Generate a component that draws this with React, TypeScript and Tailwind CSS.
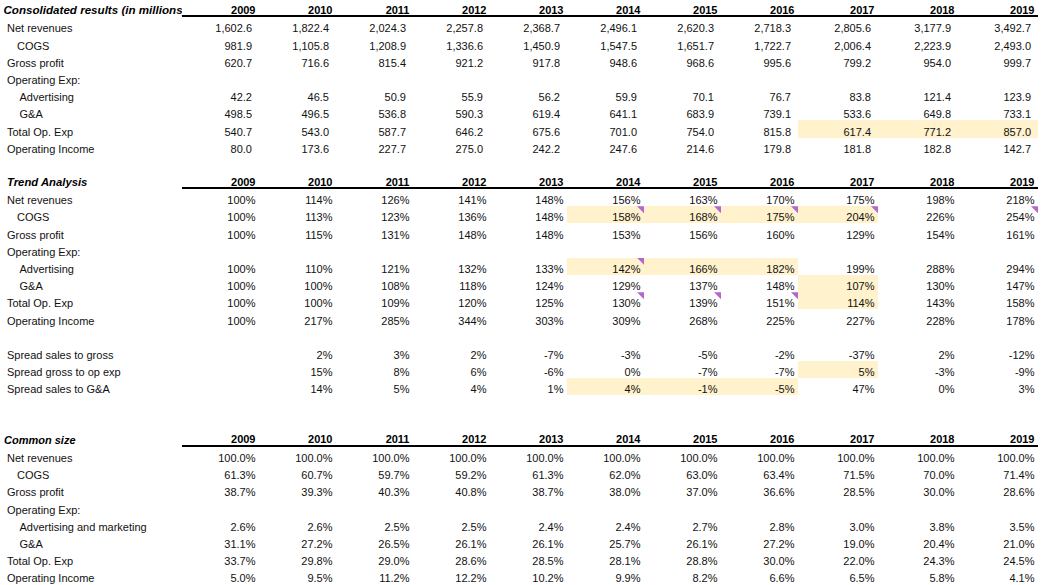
import React from "react";

const YEARS = ["2009", "2010", "2011", "2012", "2013", "2014", "2015", "2016", "2017", "2018", "2019"];

type RowDef = {
  label: string;
  indent?: 0 | 1 | 2;
  values?: string[];
  hl?: number[];
  mk?: number[];
};

type Section = {
  title: string;
  titleCls: string;
  kind: "num" | "pct";
  rows: RowDef[];
  extra?: RowDef[];
};

const Y = (...ys: number[]) => ys.map((y) => y - 2009);

const sections: Section[] = [
  {
    title: "Consolidated results (in millions)",
    titleCls: "pl-[3.5px] text-[11.6px]",
    kind: "num",
    rows: [
      { label: "Net revenues", values: ["1,602.6", "1,822.4", "2,024.3", "2,257.8", "2,368.7", "2,496.1", "2,620.3", "2,718.3", "2,805.6", "3,177.9", "3,492.7"] },
      { label: "COGS", indent: 1, values: ["981.9", "1,105.8", "1,208.9", "1,336.6", "1,450.9", "1,547.5", "1,651.7", "1,722.7", "2,006.4", "2,223.9", "2,493.0"] },
      { label: "Gross profit", values: ["620.7", "716.6", "815.4", "921.2", "917.8", "948.6", "968.6", "995.6", "799.2", "954.0", "999.7"] },
      { label: "Operating Exp:" },
      { label: "Advertising", indent: 2, values: ["42.2", "46.5", "50.9", "55.9", "56.2", "59.9", "70.1", "76.7", "83.8", "121.4", "123.9"] },
      { label: "G&A", indent: 2, values: ["498.5", "496.5", "536.8", "590.3", "619.4", "641.1", "683.9", "739.1", "533.6", "649.8", "733.1"] },
      { label: "Total Op. Exp", values: ["540.7", "543.0", "587.7", "646.2", "675.6", "701.0", "754.0", "815.8", "617.4", "771.2", "857.0"], hl: Y(2017, 2018, 2019) },
      { label: "Operating Income", values: ["80.0", "173.6", "227.7", "275.0", "242.2", "247.6", "214.6", "179.8", "181.8", "182.8", "142.7"] },
    ],
  },
  {
    title: "Trend Analysis",
    titleCls: "pl-[7px] text-[11.3px]",
    kind: "pct",
    rows: [
      { label: "Net revenues", values: ["100%", "114%", "126%", "141%", "148%", "156%", "163%", "170%", "175%", "198%", "218%"] },
      { label: "COGS", indent: 1, values: ["100%", "113%", "123%", "136%", "148%", "158%", "168%", "175%", "204%", "226%", "254%"], hl: Y(2014, 2015, 2016, 2017), mk: Y(2014, 2015, 2016, 2017, 2019) },
      { label: "Gross profit", values: ["100%", "115%", "131%", "148%", "148%", "153%", "156%", "160%", "129%", "154%", "161%"] },
      { label: "Operating Exp:" },
      { label: "Advertising", indent: 2, values: ["100%", "110%", "121%", "132%", "133%", "142%", "166%", "182%", "199%", "288%", "294%"], hl: Y(2014, 2015, 2016), mk: Y(2014) },
      { label: "G&A", indent: 2, values: ["100%", "100%", "108%", "118%", "124%", "129%", "137%", "148%", "107%", "130%", "147%"], hl: Y(2017) },
      { label: "Total Op. Exp", values: ["100%", "100%", "109%", "120%", "125%", "130%", "139%", "151%", "114%", "143%", "158%"], hl: Y(2017), mk: Y(2014, 2015, 2016) },
      { label: "Operating Income", values: ["100%", "217%", "285%", "344%", "303%", "309%", "268%", "225%", "227%", "228%", "178%"] },
    ],
    extra: [
      { label: "" },
      { label: "Spread sales to gross", values: ["", "2%", "3%", "2%", "-7%", "-3%", "-5%", "-2%", "-37%", "2%", "-12%"] },
      { label: "Spread gross to op exp", values: ["", "15%", "8%", "6%", "-6%", "0%", "-7%", "-7%", "5%", "-3%", "-9%"], hl: Y(2017) },
      { label: "Spread sales to G&A", values: ["", "14%", "5%", "4%", "1%", "4%", "-1%", "-5%", "47%", "0%", "3%"], hl: Y(2014, 2015, 2016) },
    ],
  },
  {
    title: "Common size",
    titleCls: "pl-[4px] text-[11px]",
    kind: "pct",
    rows: [
      { label: "Net revenues", values: Array(11).fill("100.0%") },
      { label: "COGS", indent: 1, values: ["61.3%", "60.7%", "59.7%", "59.2%", "61.3%", "62.0%", "63.0%", "63.4%", "71.5%", "70.0%", "71.4%"] },
      { label: "Gross profit", values: ["38.7%", "39.3%", "40.3%", "40.8%", "38.7%", "38.0%", "37.0%", "36.6%", "28.5%", "30.0%", "28.6%"] },
      { label: "Operating Exp:" },
      { label: "Advertising and marketing", indent: 2, values: ["2.6%", "2.6%", "2.5%", "2.5%", "2.4%", "2.4%", "2.7%", "2.8%", "3.0%", "3.8%", "3.5%"] },
      { label: "G&A", indent: 2, values: ["31.1%", "27.2%", "26.5%", "26.1%", "26.1%", "25.7%", "26.1%", "27.2%", "19.0%", "20.4%", "21.0%"] },
      { label: "Total Op. Exp", values: ["33.7%", "29.8%", "29.0%", "28.6%", "28.5%", "28.1%", "28.8%", "30.0%", "22.0%", "24.3%", "24.5%"] },
      { label: "Operating Income", values: ["5.0%", "9.5%", "11.2%", "12.2%", "10.2%", "9.9%", "8.2%", "6.6%", "6.5%", "5.8%", "4.1%"] },
    ],
  },
];

const GRID = "grid grid-cols-[182px_repeat(8,77px)_80px_80px_80px] h-[17.2px]";
const CELL = "flex items-end h-full leading-[12px] whitespace-nowrap";

function Marker() {
  return (
    <span className="absolute top-0 right-0 w-[7px] h-[7px] bg-[#b466d0] [clip-path:polygon(0_0,100%_0,100%_100%)]" />
  );
}

function DataRow({ row, kind }: { row: RowDef; kind: "num" | "pct" }) {
  const pad = row.indent === 1 ? "pl-[17px]" : row.indent === 2 ? "pl-[19.5px]" : "pl-[7px]";
  return (
    <div className={GRID}>
      <div className={`${CELL} ${pad} text-[#111]`}>{row.label}</div>
      {YEARS.map((_, i) => {
        const v = row.values ? row.values[i] : "";
        const hl = row.hl?.includes(i);
        const mk = row.mk?.includes(i);
        return (
          <div
            key={i}
            className={`${CELL} relative justify-end ${kind === "num" ? "pr-[7px]" : "pr-[3.5px]"} ${hl ? "bg-[#fff2cc]" : ""} text-[#111]`}
          >
            {v}
            {mk && <Marker />}
          </div>
        );
      })}
    </div>
  );
}

function HeaderRow({ s }: { s: Section }) {
  return (
    <div className={GRID}>
      <div className={`${CELL} ${s.titleCls} font-bold italic overflow-hidden text-black`}>
        <span className="pb-[1px]">{s.title}</span>
      </div>
      {YEARS.map((y) => (
        <div key={y} className={`${CELL} justify-end pr-[3.5px] font-bold text-black shadow-[inset_0_-2px_0_#000]`}>
          <span className="pb-[1.5px]">{y}</span>
        </div>
      ))}
    </div>
  );
}

function BlankRow() {
  return <div className="h-[17.2px]" />;
}

export default function App() {
  return (
    <div className="w-[1052px] h-[585px] overflow-hidden bg-white font-['Liberation_Sans',Arial,sans-serif] text-[11px]">
      <HeaderRow s={sections[0]} />
      {sections[0].rows.map((r, i) => (
        <DataRow key={i} row={r} kind="num" />
      ))}
      <BlankRow />
      <HeaderRow s={sections[1]} />
      {sections[1].rows.map((r, i) => (
        <DataRow key={i} row={r} kind="pct" />
      ))}
      {sections[1].extra!.map((r, i) => (
        <DataRow key={"e" + i} row={r} kind="pct" />
      ))}
      <BlankRow />
      <BlankRow />
      <HeaderRow s={sections[2]} />
      {sections[2].rows.map((r, i) => (
        <DataRow key={i} row={r} kind="pct" />
      ))}
    </div>
  );
}
